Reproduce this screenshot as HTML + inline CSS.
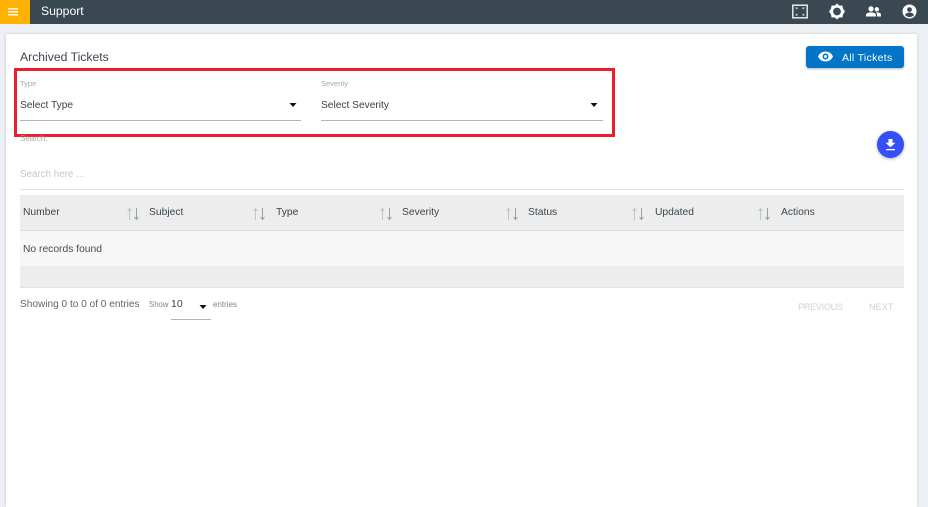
<!DOCTYPE html>
<html>
<head>
<meta charset="utf-8">
<style>
html,body{margin:0;padding:0;width:928px;height:507px;overflow:hidden;background:#edf1f5;font-family:"Liberation Sans",sans-serif;}
#root{position:absolute;left:0;top:0;width:928px;height:507px;overflow:hidden;background:#edf1f5;}
.a{position:absolute;white-space:nowrap;line-height:14px;}
.t{font-size:10.3px;color:#3a4750;}
.arrow{position:absolute;width:14px;height:14px;}
</style>
</head>
<body>
<div id="root">
<div class="a" style="left:0;top:0;width:928px;height:24px;background:#3a4852"></div>
<div class="a" style="left:0;top:0;width:30px;height:24px;background:#ffb300"></div>
<svg class="a" style="left:8px;top:8px" width="10" height="8" viewBox="0 0 10 8"><path d="M0 .8h10M0 3.800h10M0 6.800h10" stroke="#fff" stroke-width="1.400"/></svg>
<div class="a" style="left:41px;top:4px;font-size:12.200px;color:#fff">Support</div>

<svg class="a" style="left:792px;top:4px" width="16" height="15" viewBox="0 0 16 15"><rect x=".8" y="1.200" width="14.400" height="12.600" fill="none" stroke="#e8e8e8" stroke-width="1.500"/><path d="M3.500 4h1.500v1.200M12.500 4H11v1.200M3.500 11H5V9.800M12.500 11H11V9.800" fill="none" stroke="#e8e8e8"/></svg>
<svg class="a" style="left:829px;top:3px" width="16" height="17" viewBox="0 0 16 17"><path d="M8 .5 10.400 2.600 13.400 2.500 14 5.600 16 8.500 14 11.400 13.400 14.500 10.400 14.400 8 16.500 5.600 14.400 2.600 14.500 2 11.400 0 8.500 2 5.600 2.600 2.500 5.600 2.600Z" fill="#fff"/><circle cx="8" cy="8.500" r="3.900" fill="#3a4852"/></svg>
<svg class="a" style="left:866px;top:6px" width="15" height="11" viewBox="0 0 15 11"><circle cx="5" cy="2.900" r="2.600" fill="#fff"/><circle cx="10.800" cy="3.300" r="2.200" fill="#fff"/><path d="M0 10.500V8.900C0 7.200 2.600 6.400 5 6.400s5 .8 5 2.500v1.600ZM11 10.500V8.600C11 7.700 10.600 7 10 6.500 12.500 6.100 15 7.100 15 8.600v1.900Z" fill="#fff"/></svg>
<svg class="a" style="left:902px;top:4px" width="15" height="15" viewBox="0 0 15 15"><circle cx="7.500" cy="7.500" r="7" fill="#fff"/><circle cx="7.500" cy="5.600" r="2.400" fill="#3a4852"/><path d="M3 11c.8-1.700 2.800-2.500 4.500-2.500S11.200 9.300 12 11c-1 1.200-2.800 2-4.500 2S4 12.200 3 11Z" fill="#3a4852"/></svg>

<div class="a" style="left:6px;top:34px;width:911px;height:473px;background:#fff;box-shadow:0 0 3px rgba(0,0,0,.18)"></div>

<div class="a" style="left:20px;top:50px;font-size:12.200px;color:#3c4650">Archived Tickets</div>

<div class="a" style="left:806px;top:46px;width:98px;height:22px;background:#0275c8;border-radius:3px;box-shadow:0 1px 2px rgba(0,0,0,.3)"></div>
<svg class="a" style="left:818px;top:51px" width="15" height="11" viewBox="0 0 15 11"><path d="M0 5.500C1.500 2.200 4.300.5 7.500.5S13.500 2.200 15 5.500C13.500 8.800 10.700 10.500 7.500 10.500S1.500 8.800 0 5.500Z" fill="#fff"/><circle cx="7.500" cy="5.500" r="3" fill="#0275c8"/><circle cx="7.500" cy="5.500" r="1.500" fill="#fff"/></svg>
<div class="a" style="left:842px;top:51px;font-size:10.500px;color:#fff;letter-spacing:.3px">All Tickets</div>

<div class="a" style="left:14px;top:68px;width:595px;height:63px;border:3px solid #ed1c2e"></div>

<div class="a" style="left:20px;top:77px;font-size:7.500px;color:#a5a8ab">Type</div>
<div class="a" style="left:20px;top:98px;font-size:10.200px;color:#3a4048;line-height:16px">Select Type</div>
<svg class="a" style="left:289px;top:103px" width="8" height="5"><path d="M.5 0h7L4 4Z" fill="#111"/></svg>
<div class="a" style="left:20px;top:120px;width:281px;height:1px;background:#b4b4b4"></div>

<div class="a" style="left:321px;top:77px;font-size:7.500px;color:#a5a8ab">Severity</div>
<div class="a" style="left:321px;top:98px;font-size:10.200px;color:#3a4048;line-height:16px">Select Severity</div>
<svg class="a" style="left:590px;top:103px" width="8" height="5"><path d="M.5 0h7L4 4Z" fill="#111"/></svg>
<div class="a" style="left:321px;top:120px;width:282px;height:1px;background:#b4b4b4"></div>

<div class="a" style="left:20px;top:132px;font-size:8px;color:#a5a8ab">Search:</div>
<div class="a" style="left:20px;top:167px;font-size:9.800px;color:#c4c6c8;line-height:15px">Search here ...</div>
<div class="a" style="left:20px;top:189px;width:884px;height:1px;background:#e2e2e2"></div>

<div class="a" style="left:877px;top:131px;width:27px;height:27px;border-radius:50%;background:#3550f8;box-shadow:0 1px 3px rgba(0,0,0,.3)"></div>
<svg class="a" style="left:885px;top:139px" width="11" height="12" viewBox="0 0 11 12"><path d="M3.500 0h4v3.800h3L5.500 8.300.5 3.800h3ZM1 10h9v1.300H1Z" fill="#fff"/></svg>

<div class="a" style="left:20px;top:195px;width:884px;height:36px;background:#ededed"></div>
<div class="a" style="left:20px;top:230px;width:884px;height:1px;background:#dedede"></div>
<div class="a" style="left:20px;top:231px;width:884px;height:35px;background:#f7f7f7"></div>
<div class="a" style="left:20px;top:266px;width:884px;height:22px;background:#ededed"></div>
<div class="a" style="left:20px;top:287px;width:884px;height:1px;background:#e2e2e2"></div>

<div class="a t" style="left:23px;top:206px">Number</div>
<div class="a t" style="left:149px;top:206px">Subject</div>
<div class="a t" style="left:276px;top:206px">Type</div>
<div class="a t" style="left:402px;top:206px">Severity</div>
<div class="a t" style="left:528px;top:206px">Status</div>
<div class="a t" style="left:655px;top:206px">Updated</div>
<div class="a t" style="left:781px;top:206px">Actions</div>

<svg class="arrow" style="left:126px;top:207px" viewBox="0 0 14 14"><path d="M3.500 13V2M1.500 4 3.500 1.500 5.500 4" fill="none" stroke="#b4c4ca" stroke-width=".9"/><path d="M10.500 1V12M8.500 10 10.500 12.500 12.500 10" fill="none" stroke="#8a9aa6" stroke-width=".9"/></svg>
<svg class="arrow" style="left:252px;top:207px" viewBox="0 0 14 14"><path d="M3.500 13V2M1.500 4 3.500 1.500 5.500 4" fill="none" stroke="#b4c4ca" stroke-width=".9"/><path d="M10.500 1V12M8.500 10 10.500 12.500 12.500 10" fill="none" stroke="#8a9aa6" stroke-width=".9"/></svg>
<svg class="arrow" style="left:379px;top:207px" viewBox="0 0 14 14"><path d="M3.500 13V2M1.500 4 3.500 1.500 5.500 4" fill="none" stroke="#b4c4ca" stroke-width=".9"/><path d="M10.500 1V12M8.500 10 10.500 12.500 12.500 10" fill="none" stroke="#8a9aa6" stroke-width=".9"/></svg>
<svg class="arrow" style="left:505px;top:207px" viewBox="0 0 14 14"><path d="M3.500 13V2M1.500 4 3.500 1.500 5.500 4" fill="none" stroke="#b4c4ca" stroke-width=".9"/><path d="M10.500 1V12M8.500 10 10.500 12.500 12.500 10" fill="none" stroke="#8a9aa6" stroke-width=".9"/></svg>
<svg class="arrow" style="left:631px;top:207px" viewBox="0 0 14 14"><path d="M3.500 13V2M1.500 4 3.500 1.500 5.500 4" fill="none" stroke="#b4c4ca" stroke-width=".9"/><path d="M10.500 1V12M8.500 10 10.500 12.500 12.500 10" fill="none" stroke="#8a9aa6" stroke-width=".9"/></svg>
<svg class="arrow" style="left:757px;top:207px" viewBox="0 0 14 14"><path d="M3.500 13V2M1.500 4 3.500 1.500 5.500 4" fill="none" stroke="#b4c4ca" stroke-width=".9"/><path d="M10.500 1V12M8.500 10 10.500 12.500 12.500 10" fill="none" stroke="#8a9aa6" stroke-width=".9"/></svg>

<div class="a" style="left:23px;top:242px;font-size:10.300px;color:#454c54;line-height:15px">No records found</div>

<div class="a" style="left:20px;top:298px;font-size:10.100px;color:#5a6570;line-height:13px">Showing 0 to 0 of 0 entries</div>
<div class="a" style="left:149px;top:298px;font-size:7.800px;color:#7d8790">Show</div>
<div class="a" style="left:171px;top:297px;font-size:10.500px;color:#3a4048">10</div>
<svg class="a" style="left:199px;top:305px" width="8" height="5"><path d="M.5 0h7L4 4Z" fill="#111"/></svg>
<div class="a" style="left:171px;top:319px;width:40px;height:1px;background:#b4b4b4"></div>
<div class="a" style="left:213px;top:298px;font-size:8px;color:#7d8790">entries</div>

<div class="a" style="left:798px;top:300px;font-size:9.200px;color:#d4d2ce;letter-spacing:-.35px">PREVIOUS</div>
<div class="a" style="left:869px;top:300px;font-size:9.200px;color:#d2d2d6">NEXT</div>
</div>
</body>
</html>
